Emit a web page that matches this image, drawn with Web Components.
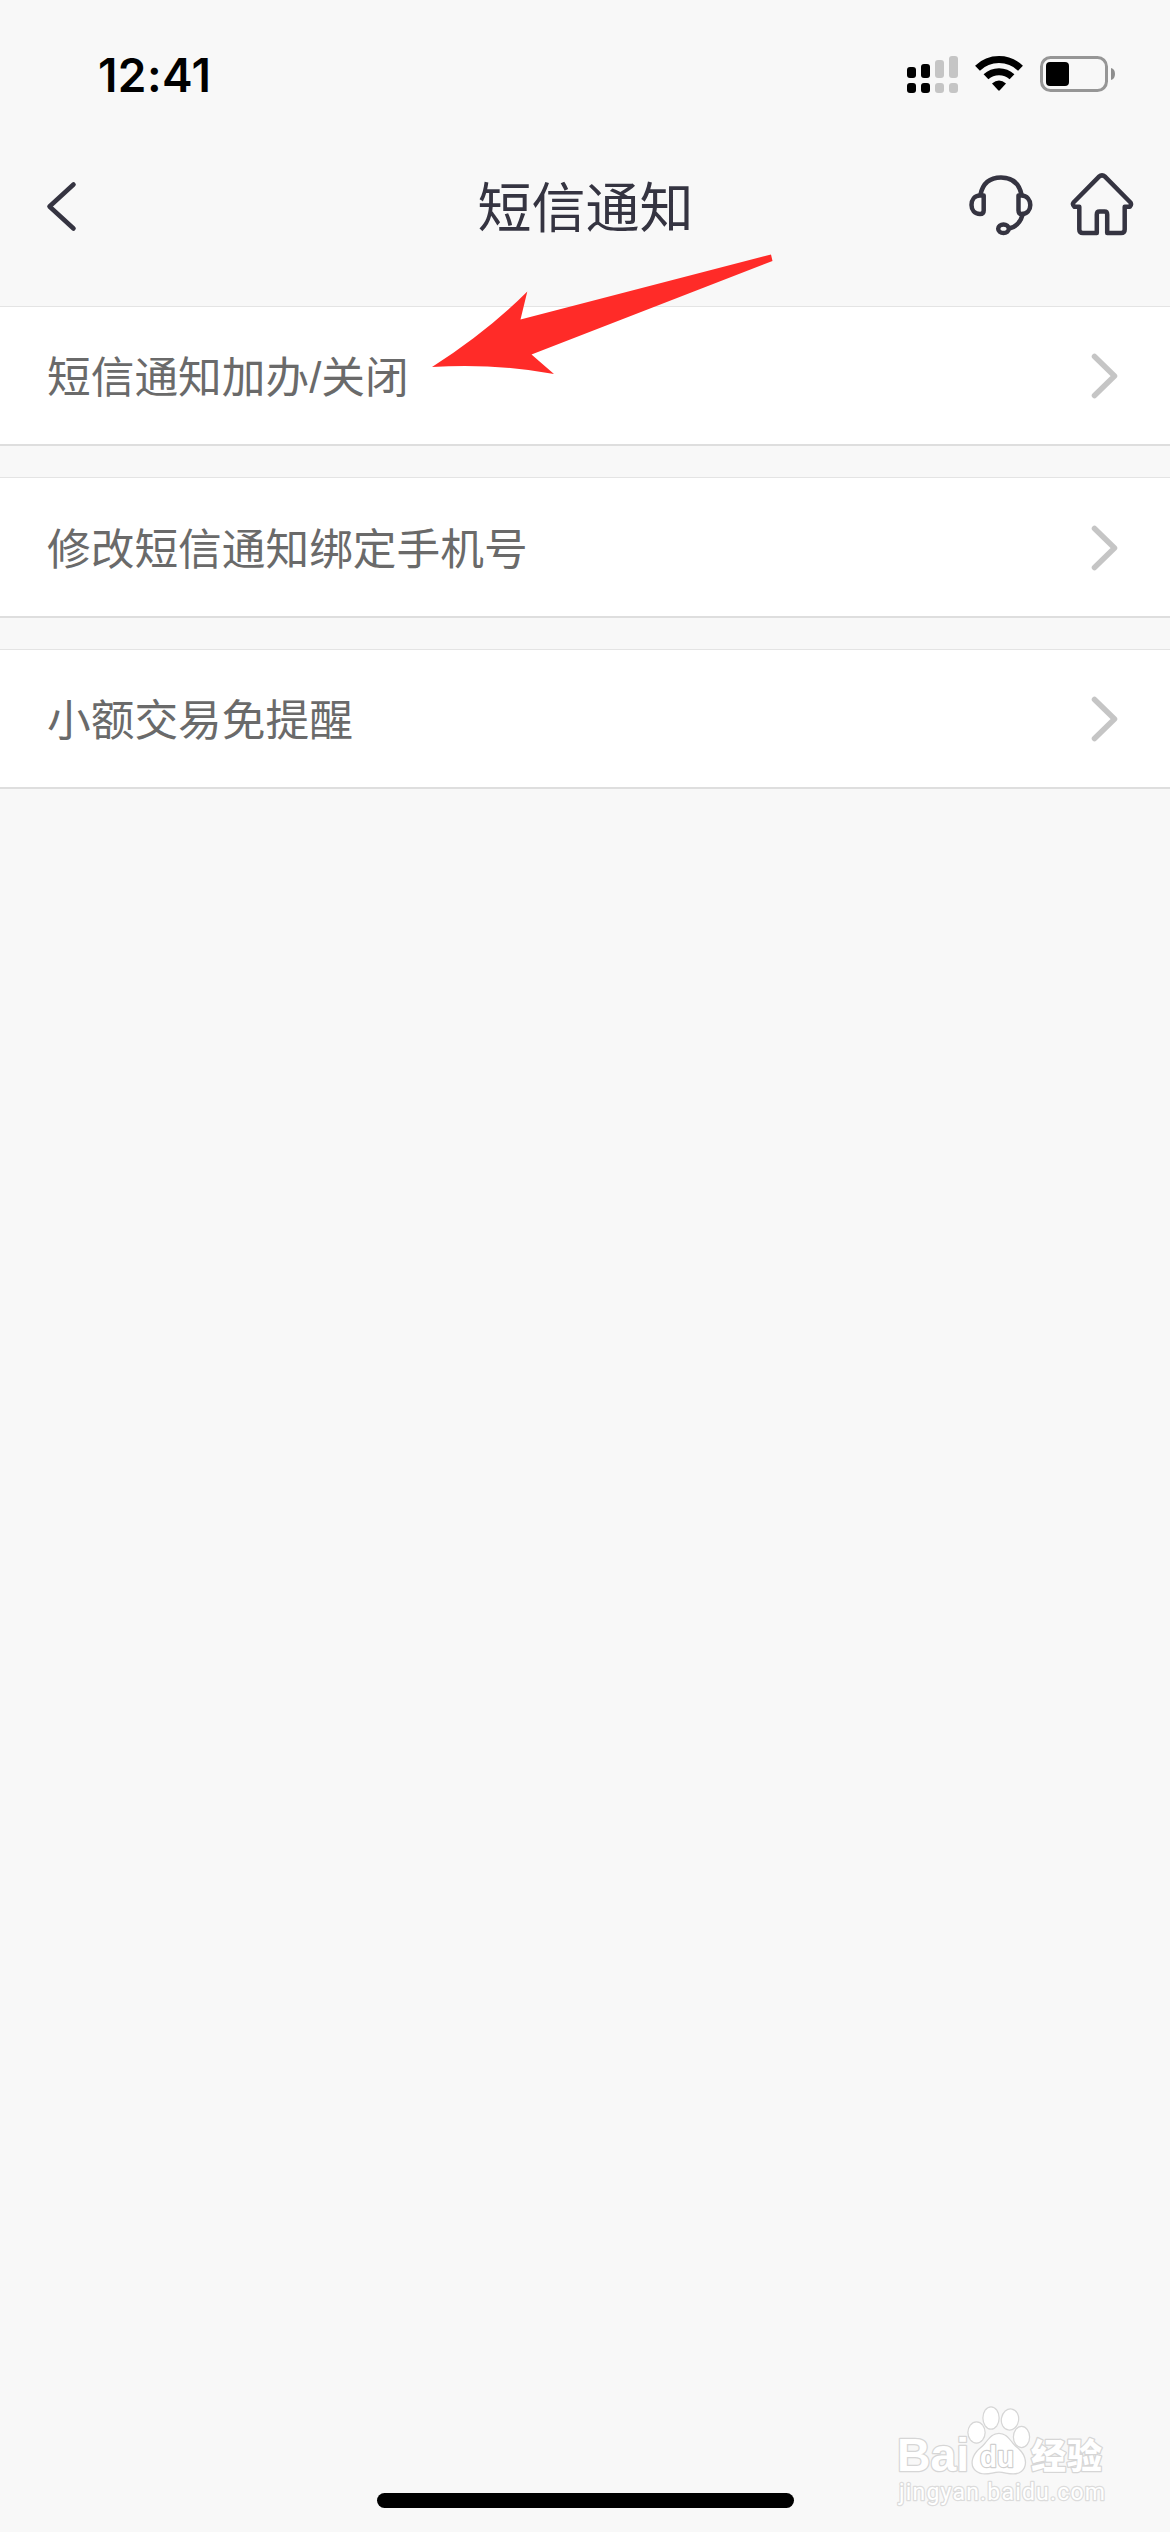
<!DOCTYPE html>
<html lang="zh-CN">
<head>
<meta charset="utf-8">
<title>短信通知</title>
<style>
  body {
    margin: 0;
    background: #f8f8f8;
    font-family: "Liberation Sans", "Noto Sans CJK SC", sans-serif;
  }
</style>
</head>
<body>
<app-screen>
  <status-bar slot="top" time="12:41"></status-bar>
  <nav-header slot="top">短信通知</nav-header>
  <menu-row>短信通知加办/关闭</menu-row>
  <menu-row>修改短信通知绑定手机号</menu-row>
  <menu-row>小额交易免提醒</menu-row>
  <red-arrow slot="overlay"></red-arrow>
  <water-mark slot="overlay"></water-mark>
</app-screen>

<script>
class AppScreen extends HTMLElement {
  constructor() {
    super();
    this.attachShadow({mode: 'open'}).innerHTML = `
      <style>
        :host {
          position: relative;
          display: flex;
          flex-direction: column;
          width: 1170px;
          height: 2532px;
          overflow: hidden;
          background: #f8f8f8;
        }
        main {
          flex: 1;
          display: flex;
          flex-direction: column;
          gap: 31px;
        }
        footer {
          display: flex;
          justify-content: center;
          padding-bottom: 24px;
        }
        .home-bar {
          width: 417px;
          height: 15px;
          border-radius: 8px;
          background: #000;
        }
      </style>
      <slot name="top"></slot>
      <main><slot></slot></main>
      <footer><div class="home-bar"></div></footer>
      <slot name="overlay"></slot>
    `;
  }
}

class StatusBar extends HTMLElement {
  connectedCallback() {
    this.attachShadow({mode: 'open'}).innerHTML = `
      <style>
        :host {
          display: flex;
          justify-content: space-between;
          align-items: center;
          box-sizing: border-box;
          height: 141px;
          padding: 8px 50px 0 98px;
        }
        .time {
          font: 600 46px/56px Inter, sans-serif;
          letter-spacing: 0.4px;
          color: #000;
        }
        svg { display: block; }
      </style>
      <span class="time">${this.getAttribute('time')}</span>
      <svg width="213" height="40" viewBox="0 0 213 40">
        <!-- dual sim signal -->
        <g fill="#000">
          <rect x="0" y="12" width="9" height="11" rx="3"/>
          <rect x="14" y="9" width="9" height="14" rx="3"/>
          <rect x="0" y="28" width="9" height="10" rx="3"/>
          <rect x="14" y="28" width="9" height="10" rx="3"/>
        </g>
        <g fill="#c5c5c5">
          <rect x="28" y="5" width="9" height="18" rx="3"/>
          <rect x="42" y="1" width="9" height="22" rx="3"/>
          <rect x="28" y="28" width="9" height="10" rx="3"/>
          <rect x="42" y="28" width="9" height="10" rx="3"/>
        </g>
        <!-- wifi -->
        <g fill="none" stroke="#000" stroke-width="7">
          <path d="M70.5 13.2a31 31 0 0 1 43 0"/>
          <path d="M79 21.8a19 19 0 0 1 26 0"/>
        </g>
        <path d="M85 28.5Q92 22.5 99 28.5L92.8 35.3Q92 36 91.2 35.3Z"/>
        <!-- battery -->
        <rect x="134.5" y="2.5" width="65" height="33" rx="9" fill="none" stroke="#969696" stroke-width="3"/>
        <rect x="139" y="7" width="23" height="24" rx="4"/>
        <path d="M204 13q4 1 4 6t-4 6z" fill="#8e8e8e"/>
      </svg>
    `;
  }
}

class NavHeader extends HTMLElement {
  constructor() {
    super();
    this.attachShadow({mode: 'open'}).innerHTML = `
      <style>
        :host {
          display: grid;
          grid-template-columns: 1fr auto 1fr;
          align-items: center;
          box-sizing: border-box;
          height: 164.500px;
          padding: 0 35px 34px 45px;
          color: #353441;
        }
        h1 {
          margin: 0 0 0 -9px;
          padding-bottom: 3px;
          font: 400 54px/80px "Noto Sans CJK SC", sans-serif;
        }
        .actions {
          display: flex;
          justify-content: flex-end;
          gap: 35px;
        }
        svg {
          display: block;
          fill: none;
          stroke: currentColor;
          stroke-linecap: round;
          stroke-linejoin: round;
        }
      </style>
      <svg width="34" height="52" viewBox="0 0 34 52" stroke-width="4.6">
        <path d="M28.5 4.5L4.5 26.5L28.5 48.5"/>
      </svg>
      <h1><slot></slot></h1>
      <div class="actions">
        <svg width="66" height="66" viewBox="0 0 66 66" stroke-width="4.5">
          <path d="M12.5 21.5C15 9.500 23 4.500 33 4.500S51 9.500 53.500 21.500"/>
          <path d="M15.700 22.500H12C6.500 22.500 3.500 27 3.500 32S6.500 41 12 41Q15.700 41 15.700 37.500Z"/>
          <path d="M50.500 22.500H53.500C59 22.500 62.300 27 62.300 32S59 41 53.500 41Q50.500 41 50.500 37.500Z"/>
          <path d="M54.500 42C52.500 49 48 53.500 42.500 55"/>
          <ellipse cx="35.500" cy="55.800" rx="5.300" ry="4.300"/>
        </svg>
        <svg width="66" height="66" viewBox="0 0 66 66" stroke-width="4.5">
          <path d="M29.800 3.800Q33 1 36.200 3.800L61.500 29.500Q62.800 31.500 60.800 33.800H55.700V56.500Q55.700 60 52 60H38.200V41.500Q38.200 38.500 35.500 38.500H30.500Q27.800 38.500 27.800 41.500V60H14Q10.300 60 10.300 56.500V33.800H5.500Q3 31.500 4.500 29.500Z"/>
        </svg>
      </div>
    `;
  }
}

class MenuRow extends HTMLElement {
  constructor() {
    super();
    this.attachShadow({mode: 'open'}).innerHTML = `
      <style>
        :host {
          display: flex;
          justify-content: space-between;
          align-items: center;
          box-sizing: border-box;
          height: 140.5px;
          padding: 0 50px 0 47px;
          border-top: 1px solid #e4e4e4;
          border-bottom: 2px solid #dedede;
          background: #fff;
          color: #6a6a6a;
          font: 400 43.7px/64px "Liberation Sans", "Noto Sans CJK SC", sans-serif;
        }
        span { padding-top: 6px; }
        svg {
          display: block;
          padding-top: 2px;
        }
      </style>
      <span><slot></slot></span>
      <svg width="30" height="48" viewBox="0 0 30 48" fill="none" stroke="#c5c5c5" stroke-width="5.5" stroke-linecap="round" stroke-linejoin="round">
        <path d="M4.500 4.500L24.500 24L4.500 43.500"/>
      </svg>
    `;
  }
}

class RedArrow extends HTMLElement {
  constructor() {
    super();
    this.attachShadow({mode: 'open'}).innerHTML = `
      <style>
        :host {
          position: absolute;
          left: 432px;
          top: 254px;
        }
        svg { display: block; }
      </style>
      <svg width="342" height="122" viewBox="0 0 342 122">
        <path fill="#ff2b28" d="M0 113Q55 78 95.300 37.500L88.500 65.500L339 .5L340.500 7L99.500 100.500L122 120Q62 109 0 113Z"/>
      </svg>
    `;
  }
}

class WaterMark extends HTMLElement {
  constructor() {
    super();
    this.attachShadow({mode: 'open'}).innerHTML = `
      <style>
        :host {
          position: absolute;
          left: 890px;
          top: 2400px;
        }
        svg { display: block; }
        text, .paw {
          fill: #fff;
          stroke: #d6d6d6;
          stroke-width: 2.500px;
          stroke-linejoin: round;
          paint-order: stroke;
        }
        .latin { font: 700 46px "Liberation Sans", sans-serif; }
        .du { font: 700 30px "Liberation Sans", sans-serif; stroke: #cfcfcf; }
        .cjk { font: 900 35px "Noto Sans CJK SC", sans-serif; }
        .url { font: 400 23px Roboto, sans-serif; stroke: #dcdcdc; }
      </style>
      <svg width="225" height="110" viewBox="0 0 225 110">
        <text class="latin" x="7" y="70.500" textLength="72" lengthAdjust="spacingAndGlyphs">Bai</text>
        <g class="paw">
          <ellipse cx="86.500" cy="32.500" rx="8" ry="10"/>
          <ellipse cx="101" cy="18" rx="7.500" ry="10.500"/>
          <ellipse cx="120" cy="19.500" rx="8" ry="10" transform="rotate(10 120 19.500)"/>
          <ellipse cx="131.500" cy="37" rx="7.500" ry="10"/>
          <path d="M109 34C118 34 120 43 128 49C136 56 137 66 131 71C124 76 116 71.500 109 71.500S94 76 87 71C80 66 82 56 90 49C98 43 100 34 109 34Z"/>
        </g>
        <text class="du" x="90" y="67" textLength="34" lengthAdjust="spacingAndGlyphs">du</text>
        <text class="cjk" x="141" y="69" textLength="71">经验</text>
        <text class="url" x="9" y="99.500" textLength="206">jingyan.baidu.com</text>
      </svg>
    `;
  }
}

customElements.define('app-screen', AppScreen);
customElements.define('status-bar', StatusBar);
customElements.define('nav-header', NavHeader);
customElements.define('menu-row', MenuRow);
customElements.define('red-arrow', RedArrow);
customElements.define('water-mark', WaterMark);
</script>
</body>
</html>
